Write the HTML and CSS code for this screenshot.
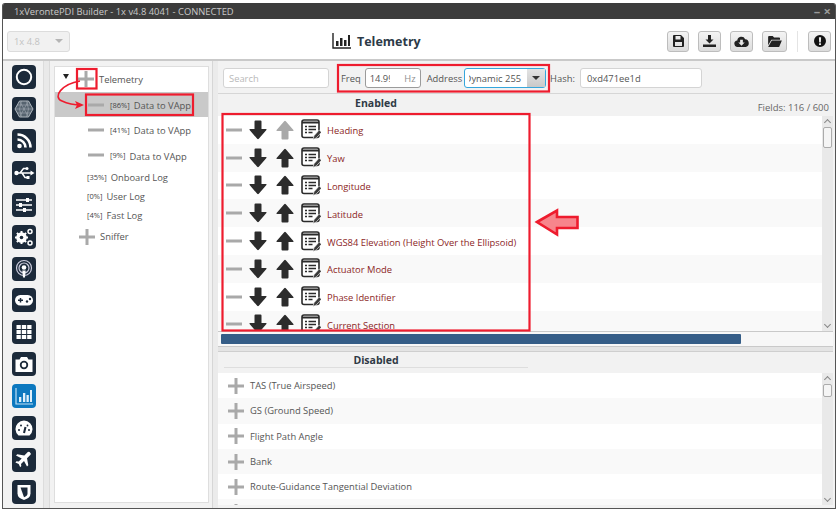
FILE: index.html
```html
<!DOCTYPE html>
<html lang="en">
<head>
    <meta charset="UTF-8">
    <meta name="viewport" content="width=device-width, initial-scale=1">
    <title>1xVerontePDI Builder</title>
    <link rel="stylesheet" href="styles.css">
</head>
<body>

<svg class="defs" width="0" height="0">
    <symbol id="i_minus" viewBox="0 0 16 16"><rect x="0" y="6.500" width="16" height="3" fill="#a9a9a9"/></symbol>
    <symbol id="i_plus" viewBox="0 0 16 16"><path d="M6.500 0h3v6.500H16v3H9.500V16h-3V9.500H0v-3h6.500z" fill="#a9a9a9"/></symbol>
    <symbol id="i_down" viewBox="0 0 18 20"><path d="M5.500 1.500Q5.500 .5 6.500 .5h5q1 0 1 1V9H17q1 0 .4 1L9.800 18.800q-.8.800-1.600 0L.6 10Q0 9 1 9h4.500z"/></symbol>
    <symbol id="i_up" viewBox="0 0 18 20"><path d="M5.500 18.500q0 1 1 1h5q1 0 1-1V11H17q1 0 .4-1L9.800 1.200q-.8-.8-1.600 0L.6 10Q0 11 1 11h4.500z"/></symbol>
    <symbol id="i_doc" viewBox="0 0 20 21">
        <rect x="1" y="1" width="17" height="17.500" rx="2" fill="#fff" stroke="#2b2b2b" stroke-width="1.600"/>
        <path d="M1 3.500h17" stroke="#2b2b2b" stroke-width="2"/>
        <path d="M4 7.500h2M4 10.500h2M4 13.500h2M7.500 7.500h7.500M7.500 10.500h7.500M7.500 13.500h4" stroke="#2b2b2b" stroke-width="1.400"/>
        <path d="M12 20.500l1-3.800 5.200-5.700 2.300 2.200-5.200 5.800z" fill="#3a3a3a" stroke="#fff" stroke-width=".6"/>
    </symbol>
</svg>

<div class="window">
    <div class="titlebar">
        <span>1xVerontePDI Builder - 1x v4.8 4041 - CONNECTED</span>
        <span class="win_ctrl">&#8211; &#215;</span>
    </div>

    <div class="toolbar">
        <div class="version"><span>1x 4.8</span><i class="caret caret_light"></i></div>
        <div class="page_title">
            <svg width="19" height="16" viewBox="0 0 19 16"><path d="M1 0v15h18" fill="none" stroke="#222" stroke-width="1.400"/><path d="M4 8h2.500v5H4zM8 5h2.500v8H8zM12 7h2.500v6H12zM16 2h2v11h-2z" fill="#222"/></svg>
            <span>Telemetry</span>
        </div>
        <div class="tool_buttons">
            <button class="tool_btn tool_save"><svg width="11" height="12" viewBox="0 0 11 12"><path d="M0 1q0-1 1-1h7l3 3v8q0 1-1 1H1q-1 0-1-1zM2.500 1v3.500h5V1zM2 7v4h7V7z" fill="#222" fill-rule="evenodd"/></svg></button>
            <button class="tool_btn"><svg width="13" height="12" viewBox="0 0 13 12"><path d="M5 0h3v4.500h2.500L6.500 8.500 2.500 4.500H5zM0 9.500h13V12H0z" fill="#222"/></svg></button>
            <button class="tool_btn"><svg width="15" height="11" viewBox="0 0 16 12"><path d="M4 12a3.500 3.500 0 0 1-.6-7A4.500 4.500 0 0 1 12 3.500 4.300 4.300 0 0 1 12.500 12zM6.500 4v3H4.500L8 10.500 11.500 7h-2V4z" fill="#222" fill-rule="evenodd"/></svg></button>
            <button class="tool_btn tool_wide"><svg width="14" height="11" viewBox="0 0 15 12"><path d="M0 1q0-1 1-1h4l1.500 1.500H12q1 0 1 1V4H3.500L0 10zM4 5h11l-3 7H0z" fill="#222"/></svg></button>
            <div class="tool_sep"></div>
            <button class="tool_btn"><svg width="12" height="12" viewBox="0 0 13 13"><path d="M6.500 0a6.500 6.500 0 1 1 0 13 6.500 6.500 0 0 1 0-13zM5.300 2.500l.3 5.500h1.800l.3-5.500zM5.400 9v1.800h2.200V9z" fill="#111" fill-rule="evenodd"/></svg></button>
        </div>
    </div>

    <div class="content">
        <div class="rail">
            <div class="rail_btn"><svg viewBox="0 0 24 24"><circle cx="12" cy="12" r="7.200" fill="none" stroke="#fff" stroke-width="2"/></svg></div>
            <div class="rail_btn"><svg viewBox="0 0 24 24"><path d="M7.500 4h9L21 12l-4.500 8h-9L3 12z" fill="#56636f" stroke="#aeb6bd"/><path d="M7.500 4L12 12 7.500 20M16.500 4L12 12l4.500 8M3 12h18M5 8h14M5 16h14M9.500 4l-2 8 2 8M14.500 4l2 8-2 8" fill="none" stroke="#a4adb5" stroke-width=".6"/></svg></div>
            <div class="rail_btn"><svg viewBox="0 0 24 24"><circle cx="7.500" cy="17" r="2.300" fill="#fff"/><path d="M5.500 10.500a8 8 0 0 1 8 8M5.500 5.500a13 13 0 0 1 13 13" fill="none" stroke="#fff" stroke-width="2.600"/></svg></div>
            <div class="rail_btn"><svg viewBox="0 0 24 24"><path d="M4 12h15M8 12l3.500-4.500H14M10 12l3 4.500h2" fill="none" stroke="#fff" stroke-width="1.500"/><circle cx="4.500" cy="12" r="2.200" fill="#fff"/><path d="M18.500 9.500l4 2.500-4 2.500z" fill="#fff"/><circle cx="15" cy="7.500" r="1.500" fill="#fff"/><rect x="14.500" y="15" width="3" height="3" fill="#fff"/></svg></div>
            <div class="rail_btn"><svg viewBox="0 0 24 24"><path d="M4 7h16M4 12h16M4 17h16" stroke="#fff" stroke-width="1.300"/><path d="M14 5h3v4h-3zM7 10h3v4H7zM11 15h3v4h-3z" fill="#fff"/></svg></div>
            <div class="rail_btn"><svg viewBox="0 0 24 24"><circle cx="9.500" cy="12.500" r="3.800" fill="none" stroke="#fff" stroke-width="3"/><path d="M9.500 6v13M3 12.500h13M4.900 7.900l9.200 9.200M14.100 7.900l-9.200 9.200" stroke="#fff" stroke-width="2"/><circle cx="9.500" cy="12.500" r="1.800" fill="#1c2a3a"/><circle cx="18" cy="6.500" r="2" fill="none" stroke="#fff" stroke-width="1.500"/><circle cx="18" cy="18" r="2" fill="none" stroke="#fff" stroke-width="1.500"/></svg></div>
            <div class="rail_btn"><svg viewBox="0 0 24 24"><circle cx="12" cy="11" r="7.500" fill="none" stroke="#ccd" stroke-width="1.200"/><circle cx="12" cy="11" r="5" fill="none" stroke="#ccd" stroke-width="1.200"/><circle cx="12" cy="10.500" r="2.300" fill="#fff"/><path d="M10.300 13.500h3.400l-.7 7h-2z" fill="#fff"/></svg></div>
            <div class="rail_btn"><svg viewBox="0 0 24 24"><rect x="3" y="7" width="18" height="10.500" rx="5.200" fill="#fff"/><path d="M6 12.300h5M8.500 10v4.600" stroke="#1c2a3a" stroke-width="1.500"/><circle cx="15" cy="13.500" r="1.200" fill="#1c2a3a"/><circle cx="18" cy="11" r="1.200" fill="#1c2a3a"/></svg></div>
            <div class="rail_btn"><svg viewBox="0 0 24 24"><path d="M4.500 5h4.300v4H4.500zM9.800 5h4.400v4H9.800zM15.200 5h4.300v4h-4.300zM4.500 10h4.300v4H4.500zM9.800 10h4.400v4H9.800zM15.200 10h4.300v4h-4.300zM4.500 15h4.300v4H4.500zM9.800 15h4.400v4H9.800zM15.200 15h4.300v4h-4.300z" fill="#fff"/></svg></div>
            <div class="rail_btn"><svg viewBox="0 0 24 24"><path d="M3.500 7.500h4l1.500-2.500h6l1.500 2.500h4V20h-17z" fill="#fff"/><circle cx="12" cy="13" r="3.300" fill="none" stroke="#1c2a3a" stroke-width="1.800"/></svg></div>
            <div class="rail_btn rail_active"><svg viewBox="0 0 24 24"><path d="M4 4v16h17" fill="none" stroke="#bfe0f5" stroke-width="1.200"/><path d="M7 13h2.300v5H7zM11 9h2.300v9H11zM14.500 11h2.300v7h-2.300zM18 6h2v12h-2z" fill="#dff0fb"/></svg></div>
            <div class="rail_btn"><svg viewBox="0 0 24 24"><path d="M6.500 19.500a8.500 8.500 0 1 1 11 0z" fill="#fff"/><path d="M12 17l1.500-6" stroke="#1c2a3a" stroke-width="2"/><circle cx="7" cy="14" r="1" fill="#1c2a3a"/><circle cx="9" cy="9.500" r="1" fill="#1c2a3a"/><circle cx="17" cy="14" r="1" fill="#1c2a3a"/><circle cx="15.500" cy="9.500" r=".9" fill="#1c2a3a"/></svg></div>
            <div class="rail_btn"><svg viewBox="0 0 24 24"><path d="M18.500 5.500q1-1 0 1.200l-3.500 3.600 1.300 7-1.300 1.300-3-5.700-3 3 .3 2.200-1.100 1.100-1.500-3.300-3.300-1.500L4.500 13.300l2.200.3 3-3-5.700-3 1.300-1.300 7 1.300 3.500-3.500q2.200-1 2.700 1.400z" fill="#fff"/></svg></div>
            <div class="rail_btn"><svg viewBox="0 0 24 24"><path d="M5.500 5h13v8.500q0 4.500-6.500 6.500-6.500-2-6.500-6.500z" fill="#fff"/><path d="M8.500 7.500h7v6q0 2.500-3.500 3.700z" fill="#1c2a3a"/></svg></div>
        </div>

        <div class="tree_wrap">
            <div class="tree">
                <div class="tree_row tree_top">
                    <i class="tree_toggle"></i>
                    <svg class="ic_16"><use href="#i_plus"/></svg>
                    <span class="tree_name">Telemetry</span>
                </div>
                <div class="tree_row tree_sub selected">
                    <svg class="ic_16"><use href="#i_minus"/></svg>
                    <small>[86%]</small><span class="tree_name">Data to VApp</span>
                </div>
                <div class="tree_row tree_sub">
                    <svg class="ic_16"><use href="#i_minus"/></svg>
                    <small>[41%]</small><span class="tree_name">Data to VApp</span>
                </div>
                <div class="tree_row tree_sub">
                    <svg class="ic_16"><use href="#i_minus"/></svg>
                    <small>[9%]</small><span class="tree_name">Data to VApp</span>
                </div>
                <div class="tree_row tree_log"><small>[35%]</small><span class="tree_name">Onboard Log</span></div>
                <div class="tree_row tree_log"><small>[0%]</small><span class="tree_name">User Log</span></div>
                <div class="tree_row tree_log"><small>[4%]</small><span class="tree_name">Fast Log</span></div>
                <div class="tree_row tree_sniffer">
                    <svg class="ic_16"><use href="#i_plus"/></svg>
                    <span class="tree_name">Sniffer</span>
                </div>
            </div>
        </div>

        <div class="main">
            <div class="filter_bar">
                <div class="field search_field">Search</div>
                <label class="freq_label">Freq</label>
                <div class="field freq_field"><span class="freq_value">14.99</span><span class="unit">Hz</span></div>
                <label class="addr_label">Address</label>
                <div class="addr_combo"><div class="addr_value"><span>Dynamic 255</span></div><div class="addr_arrow"><i class="caret"></i></div></div>
                <label class="hash_label">Hash:</label>
                <div class="field hash_field">0xd471ee1d</div>
            </div>

            <div class="enabled_head">
                <b class="head_title">Enabled</b>
                <span class="fields_count">Fields: 116 / 600</span>
            </div>
            <div class="list enabled_list">
                <div class="rows">
                    <div class="row"><svg class="ic_minus"><use href="#i_minus"/></svg><svg class="ic_arrow"><use href="#i_down"/></svg><svg class="ic_arrow off"><use href="#i_up"/></svg><svg class="ic_doc"><use href="#i_doc"/></svg><span>Heading</span></div>
                    <div class="row"><svg class="ic_minus"><use href="#i_minus"/></svg><svg class="ic_arrow"><use href="#i_down"/></svg><svg class="ic_arrow"><use href="#i_up"/></svg><svg class="ic_doc"><use href="#i_doc"/></svg><span>Yaw</span></div>
                    <div class="row"><svg class="ic_minus"><use href="#i_minus"/></svg><svg class="ic_arrow"><use href="#i_down"/></svg><svg class="ic_arrow"><use href="#i_up"/></svg><svg class="ic_doc"><use href="#i_doc"/></svg><span>Longitude</span></div>
                    <div class="row"><svg class="ic_minus"><use href="#i_minus"/></svg><svg class="ic_arrow"><use href="#i_down"/></svg><svg class="ic_arrow"><use href="#i_up"/></svg><svg class="ic_doc"><use href="#i_doc"/></svg><span>Latitude</span></div>
                    <div class="row"><svg class="ic_minus"><use href="#i_minus"/></svg><svg class="ic_arrow"><use href="#i_down"/></svg><svg class="ic_arrow"><use href="#i_up"/></svg><svg class="ic_doc"><use href="#i_doc"/></svg><span>WGS84 Elevation (Height Over the Ellipsoid)</span></div>
                    <div class="row"><svg class="ic_minus"><use href="#i_minus"/></svg><svg class="ic_arrow"><use href="#i_down"/></svg><svg class="ic_arrow"><use href="#i_up"/></svg><svg class="ic_doc"><use href="#i_doc"/></svg><span>Actuator Mode</span></div>
                    <div class="row"><svg class="ic_minus"><use href="#i_minus"/></svg><svg class="ic_arrow"><use href="#i_down"/></svg><svg class="ic_arrow"><use href="#i_up"/></svg><svg class="ic_doc"><use href="#i_doc"/></svg><span>Phase Identifier</span></div>
                    <div class="row"><svg class="ic_minus"><use href="#i_minus"/></svg><svg class="ic_arrow"><use href="#i_down"/></svg><svg class="ic_arrow"><use href="#i_up"/></svg><svg class="ic_doc"><use href="#i_doc"/></svg><span>Current Section</span></div>
                </div>
                <div class="vscroll"><i class="chev_up"></i><i class="thumb"></i><i class="chev_down"></i></div>
            </div>
            <div class="hscroll"><div class="hthumb"></div></div>
            <div class="splitter"></div>

            <div class="disabled_head"><b class="head_title">Disabled</b></div>
            <div class="list disabled_list">
                <div class="rows">
                    <div class="row2"><svg class="ic_16"><use href="#i_plus"/></svg><span>TAS (True Airspeed)</span></div>
                    <div class="row2"><svg class="ic_16"><use href="#i_plus"/></svg><span>GS (Ground Speed)</span></div>
                    <div class="row2"><svg class="ic_16"><use href="#i_plus"/></svg><span>Flight Path Angle</span></div>
                    <div class="row2"><svg class="ic_16"><use href="#i_plus"/></svg><span>Bank</span></div>
                    <div class="row2"><svg class="ic_16"><use href="#i_plus"/></svg><span>Route-Guidance Tangential Deviation</span></div>
                    <div class="row2"><svg class="ic_16"><use href="#i_plus"/></svg></div>
                </div>
                <div class="vscroll"><i class="chev_up"></i><i class="thumb thumb_small"></i><i class="chev_down"></i></div>
            </div>
        </div>
    </div>
</div>

<!-- red annotations drawn over the screenshot -->
<svg class="marks" width="839" height="512" viewBox="0 0 839 512">
    <g fill="none" stroke="#ee1c2e" stroke-width="2.200">
        <rect x="77" y="69" width="19.500" height="19.500"/>
        <rect x="86" y="94.500" width="107" height="20.500"/>
        <rect x="338" y="65" width="211" height="26.500"/>
        <rect x="222.500" y="114" width="307" height="216.500"/>
        <path d="M80 81C62 84 52 97 62 101Q70 105 82 105" stroke-width="1.600"/>
    </g>
    <path d="M84 105l-9-4 2 4-2 4z" fill="#ee1c2e"/>
    <path d="M537 222l20-11.500v6.500h20.500v11H557v6.500z" fill="#f7858c" stroke="#ee1c2e" stroke-width="2.600"/>
</svg>

</body>
</html>
```

FILE: styles.css
```css
* {
    box-sizing: border-box;
}

body {
    margin: 0;
    padding: 3px 3px 0 2px;
    width: 839px;
    height: 512px;
    overflow: hidden;
    background: #fff;
    font-family: "Open Sans", sans-serif;
    font-size: 9.400px;
    color: #444;
}

.defs {
    position: absolute;
}

.marks {
    position: absolute;
    top: 0;
    left: 0;
}

.window {
    width: 834px;
    height: 506px;
    display: flex;
    flex-direction: column;
    border: 1px solid #555;
    border-top: 0;
    border-radius: 3px 3px 0 0;
    background: #f2f2f2;
    overflow: hidden;
}

.titlebar {
    height: 16px;
    flex: none;
    display: flex;
    justify-content: space-between;
    align-items: center;
    padding: 0 4px 0 11px;
    background: #3c3c3c;
    color: #c9c9c9;
}

.win_ctrl {
    font-weight: bold;
    color: #9a9a9a;
    font-size: 13px;
    line-height: 16px;
}

.toolbar {
    height: 42px;
    flex: none;
    display: flex;
    align-items: center;
    padding: 4px 4px 0 4px;
    background: #fff;
    border-bottom: 2px solid #c9c9c9;
}

.version {
    width: 63px;
    height: 21px;
    display: flex;
    align-items: center;
    justify-content: space-between;
    padding: 0 6px;
    background: #f1f1f1;
    border: 1px solid #dcdcdc;
    border-radius: 3px;
    color: #c3c3c3;
}

.caret {
    display: block;
    width: 0;
    height: 0;
    border-left: 4px solid transparent;
    border-right: 4px solid transparent;
    border-top: 4px solid #333;
}

.caret_light {
    border-top-color: #b5b5b5;
}

.page_title {
    margin-left: 262px;
    display: flex;
    align-items: center;
    gap: 6px;
    font-size: 12.500px;
    font-weight: bold;
    color: #2c3a48;
}

.tool_buttons {
    margin-left: auto;
    display: flex;
    align-items: center;
    gap: 9px;
}

.tool_btn {
    width: 23px;
    height: 21px;
    padding: 0;
    display: flex;
    align-items: center;
    justify-content: center;
    background: linear-gradient(#f4f4f4, #dcdcdc);
    border: 1px solid #bdbdbd;
    border-radius: 3px;
}

.tool_save {
    width: 22px;
}

.tool_wide {
    width: 25px;
}

.tool_sep {
    width: 1px;
    height: 21px;
    margin: 0 1px;
    background: #e4e4e4;
}

.content {
    flex: 1;
    min-height: 0;
    display: flex;
}

.rail {
    width: 41px;
    flex: none;
    display: flex;
    flex-direction: column;
    justify-content: space-between;
    padding: 4px 0 4px 9px;
    border-right: 1px solid #dcdcdc;
}

.rail_btn {
    width: 24px;
    height: 24px;
    background: #1c2a3a;
    border-radius: 4px;
}

.rail_btn svg {
    display: block;
    width: 24px;
    height: 24px;
}

.rail_active {
    background: #0c78bf;
}

.tree_wrap {
    width: 174px;
    flex: none;
    padding: 5px 9px 5px 10px;
    background: linear-gradient(to right, #e9e9e9 5px, #dadada 5px, #dadada 6px, #f2f2f2 6px, #f2f2f2 168px, #d6d6d6 168px, #d6d6d6 169px, #ebebeb 169px);
}

.tree {
    height: 100%;
    background: #fff;
    border: 1px solid #dedede;
}

.tree_row {
    display: flex;
    align-items: center;
    color: #555;
}

.tree_row small {
    font-size: 7.500px;
    margin-right: 4px;
    color: #444;
}

.ic_16 {
    width: 16px;
    height: 16px;
    flex: none;
}

.tree_name {
    white-space: nowrap;
}

.tree_top {
    height: 25px;
    padding: 0 0 2px 8px;
}

.tree_top .tree_name,
.tree_sub .tree_name,
.row span {
    padding-top: 2px;
}

.tree_toggle {
    width: 0;
    height: 0;
    margin: -4px 9px 0 0;
    border-left: 3.500px solid transparent;
    border-right: 3.500px solid transparent;
    border-top: 5px solid #222;
}

.tree_top .tree_name,
.tree_sniffer .tree_name {
    margin-left: 5px;
}

.tree_sub {
    height: 25.300px;
    padding-left: 33px;
}

.tree_sub .ic_16 {
    margin-right: 6px;
}

.selected {
    background: #c9c9c9;
}

.tree_log {
    height: 19px;
    padding-left: 32px;
}

.tree_sniffer {
    height: 24px;
    padding-left: 24px;
}

.main {
    flex: 1;
    min-width: 0;
    display: flex;
    flex-direction: column;
    padding: 0 2px 3px 0;
}

.filter_bar {
    height: 33px;
    flex: none;
    display: flex;
    align-items: center;
    padding: 1px 0 0 5px;
    border-bottom: 1px solid #d6d6d6;
    color: #555;
}

.filter_bar label {
    padding-top: 2px;
}

.field {
    height: 20px;
    display: flex;
    align-items: center;
    padding: 2px 6px 0;
    background: #fff;
    border: 1px solid #d4d4d4;
    border-radius: 3px;
}

.search_field {
    width: 106px;
    padding: 2px 5px 0;
    color: #b9b9b9;
}

.freq_label {
    margin-left: 12px;
}

.freq_field {
    width: 56px;
    margin-left: 4px;
    border-color: #9b9b9b;
    padding: 2px 4px 0;
    justify-content: space-between;
}

.freq_value {
    width: 20px;
    overflow: hidden;
}

.unit {
    color: #8f8f8f;
}

.addr_label {
    margin-left: 6px;
}

.addr_combo {
    width: 82px;
    height: 20px;
    margin-left: 2px;
    display: flex;
    border: 1px solid #35a6dc;
    border-radius: 3px;
    background: #fff;
}

.addr_value {
    width: 58px;
    margin-left: 4px;
    padding: 2px 6px 0 0;
    display: flex;
    align-items: center;
    justify-content: flex-end;
    overflow: hidden;
    white-space: nowrap;
}

.addr_value span {
    flex: none;
}

.addr_arrow {
    flex: 1;
    display: flex;
    align-items: center;
    justify-content: center;
    background: linear-gradient(#e4e4e4, #c9c9c9);
}

.hash_label {
    margin-left: 4px;
}

.hash_field {
    width: 122px;
    margin-left: 5px;
}

.enabled_head {
    height: 22px;
    flex: none;
    position: relative;
    padding-left: 6px;
    color: #2f3a45;
}

.head_title {
    display: block;
    width: 304px;
    text-align: center;
    line-height: 18px;
    font-size: 10.500px;
}

.fields_count {
    position: absolute;
    right: 4px;
    top: 7px;
    color: #666;
    font-size: 9.500px;
}

.list {
    display: flex;
    background: #fff;
    overflow: hidden;
    flex: none;
}

.enabled_list {
    height: 215px;
}

.disabled_list {
    flex: 1;
    min-height: 0;
}

.rows {
    flex: 1;
    min-width: 0;
}

.row {
    height: 27.800px;
    display: flex;
    align-items: center;
    padding-left: 8px;
    color: #8c1f1f;
}

.row:nth-child(even),
.row2:nth-child(even) {
    background: #f9f9f9;
}

.ic_minus {
    width: 16px;
    height: 16px;
    flex: none;
    margin-right: 7px;
}

.ic_arrow {
    width: 18px;
    height: 20px;
    flex: none;
    margin-right: 9px;
    fill: #2c2c2c;
}

.ic_arrow.off {
    fill: #a9a9a9;
}

.ic_doc {
    width: 20px;
    height: 21px;
    flex: none;
    margin: 0 6px 0 -2px;
}

.row2 {
    height: 25.300px;
    display: flex;
    align-items: center;
    gap: 6px;
    padding-left: 10px;
    color: #555;
}

.vscroll {
    width: 11px;
    flex: none;
    display: flex;
    flex-direction: column;
    align-items: center;
    background: #e9e9e9;
}

.chev_up,
.chev_down {
    width: 5px;
    height: 5px;
    flex: none;
    border-left: 1px solid #888;
    border-top: 1px solid #888;
}

.chev_up {
    transform: rotate(45deg);
    margin-top: 4px;
}

.chev_down {
    transform: rotate(225deg);
    margin-top: auto;
    margin-bottom: 4px;
}

.thumb {
    width: 9px;
    height: 21px;
    margin-top: 2px;
    background: #f5f5f5;
    border: 1px solid #ababab;
    border-radius: 2px;
}

.thumb_small {
    height: 13px;
}

.hscroll {
    height: 16px;
    flex: none;
    padding: 2px 1px 2px 3px;
    border-top: 1px solid #c9c9c9;
    border-bottom: 1px solid #c9c9c9;
    background: #f7f7f7;
}

.hthumb {
    width: 520px;
    height: 100%;
    background: #355d87;
    border-radius: 1px;
}

.splitter {
    height: 5px;
    flex: none;
    background: #e4e4e4;
    border-bottom: 1px solid #cfcfcf;
}

.disabled_head {
    height: 21px;
    flex: none;
    padding-left: 6px;
    color: #2f3a45;
}

.disabled_head .head_title {
    height: 16px;
    line-height: 16px;
    border-bottom: 1px solid #dedede;
}
```
